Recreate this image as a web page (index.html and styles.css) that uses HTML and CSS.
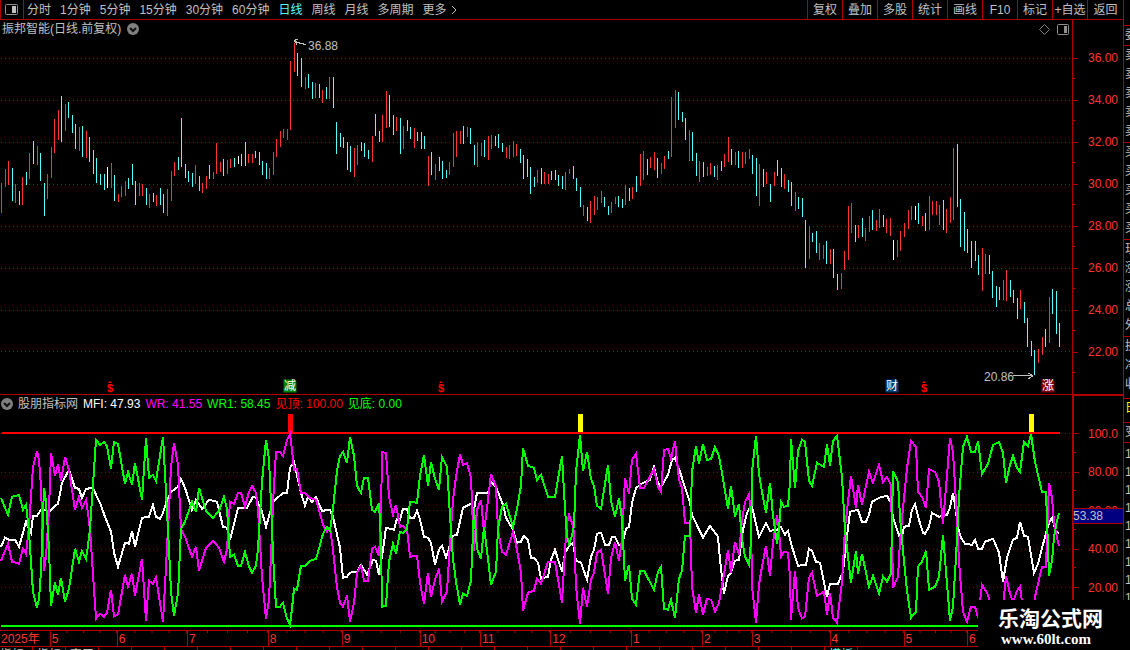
FILE: index.html
```html
<!DOCTYPE html>
<html lang="zh-CN">
<head>
    <meta charset="UTF-8">
    <meta name="viewport" content="width=device-width, initial-scale=1.0">
    <title>振邦智能 日线</title>
    <link rel="stylesheet" href="styles.css">
</head>
<body>
    <div class="terminal">
        <header class="toolbar">
            <button class="layout-btn" aria-label="布局">
                <svg width="13" height="11" viewBox="0 0 13 11"><rect x="0.500" y="0.500" width="12" height="10" rx="1" fill="none" stroke="#909090"/><rect x="7" y="2" width="4" height="7" fill="#c0c0c0"/></svg>
            </button>
            <nav class="periods">
                <button>分时</button>
                <button>1分钟</button>
                <button>5分钟</button>
                <button>15分钟</button>
                <button>30分钟</button>
                <button>60分钟</button>
                <button class="active">日线</button>
                <button>周线</button>
                <button>月线</button>
                <button>多周期</button>
                <button class="more">更多<svg width="6" height="10" viewBox="0 0 6 10"><path d="M1 1l4 4-4 4" fill="none" stroke="#c0c0c0"/></svg></button>
            </nav>
            <div class="tools">
                <button>复权</button>
                <button>叠加</button>
                <button>多股</button>
                <button>统计</button>
                <button>画线</button>
                <button>F10</button>
                <button>标记</button>
                <button>+自选</button>
                <button>返回</button>
            </div>
        </header>

        <section class="price">
            <div class="plot">
                <div class="caption">
                    <span>振邦智能(日线.前复权)</span>
                    <svg class="drop" width="12" height="12" viewBox="0 0 12 12"><circle cx="6" cy="6" r="6" fill="#808080"/><path d="M3 5l3 3 3-3" fill="none" stroke="#101010" stroke-width="2"/></svg>
                    <div class="caption-icons">
                        <svg width="11" height="11" viewBox="0 0 11 11"><path d="M5.500 0.500l5 5-5 5-5-5z" fill="none" stroke="#808080"/></svg>
                        <svg width="12" height="11" viewBox="0 0 12 11"><rect x="0.500" y="0.500" width="11" height="10" rx="1" fill="none" stroke="#909090"/><rect x="7" y="2" width="3" height="7" fill="#909090"/></svg>
                    </div>
                </div>
                <div class="canvas">
                    <svg id="candles" viewBox="0 38 1072 356" preserveAspectRatio="none"></svg>
                    <div id="marks"></div>
                </div>
            </div>
            <ul class="axis">
                <li>36.00</li>
                <li>34.00</li>
                <li>32.00</li>
                <li>30.00</li>
                <li>28.00</li>
                <li>26.00</li>
                <li>24.00</li>
                <li>22.00</li>
            </ul>
        </section>

        <section class="indicator">
            <div class="plot">
                <div class="legend">
                    <svg class="drop" width="12" height="12" viewBox="0 0 12 12"><circle cx="6" cy="6" r="6" fill="#808080"/><path d="M3 5l3 3 3-3" fill="none" stroke="#101010" stroke-width="2"/></svg>
                    <span>股朋指标网</span>
                    <span class="mfi">MFI: 47.93</span>
                    <span class="wr">WR: 41.55</span>
                    <span class="wr1">WR1: 58.45</span>
                    <span class="top">见顶: 100.00</span>
                    <span class="wr1">见底: 0.00</span>
                </div>
                <div class="canvas">
                    <svg id="lines" viewBox="0 412 1072 218" preserveAspectRatio="none"></svg>
                </div>
            </div>
            <ul class="axis">
                <li>100.0</li>
                <li>80.00</li>
                <li>60.00</li>
                <li>40.00</li>
                <li>20.00</li>
            </ul>
            <span class="cursor-value">53.38</span>
        </section>

        <div class="months" id="months"></div>

        <footer class="tabs">
            <button>指标A</button>
            <button>指标</button>
            <button>窗口</button>
            <button>MACD</button>
            <button>DMI</button>
            <button>DMA</button>
            <button>FSL</button>
            <button>TRIX</button>
            <button>BRAR</button>
            <button>CR</button>
            <button>VR</button>
            <button>OBV</button>
            <button>ASI</button>
            <button>EMV</button>
            <button>VOL</button>
            <button>RSI</button>
            <button>WR</button>
            <button>SAR</button>
            <button>KDJ</button>
            <button>CCI</button>
            <button>ROC</button>
            <button>MTM</button>
            <button>BOLL</button>
            <button>PSY</button>
            <button>MCST</button>
            <button class="active">模板</button>
        </footer>
    </div>

    <aside class="quote">
        <div class="group blank"></div>
        <div class="group"><span>委比</span></div>
        <div class="group tall"><span>卖五</span><span>卖四</span><span>卖三</span><span>卖二</span><span>卖一</span></div>
        <div class="group tall"><span>买一</span><span>买二</span><span>买三</span><span>买四</span><span>买五</span></div>
        <div class="group tall"><span>现价</span><span>涨跌</span><span>涨幅</span><span>总量</span><span>外盘</span></div>
        <div class="group three"><span>换手</span><span>净资</span><span>收益</span></div>
        <div class="group date"><span>日期</span></div>
        <div class="group"><span>变动</span></div>
        <div class="group ticks"><span>14</span><span>14</span><span>14</span><span>14</span><span>14</span><span>14</span><span>14</span><span>14</span><span>14</span></div>
    </aside>

    <div class="watermark">
        <strong>乐淘公式网</strong>
        <a href="#">www.60lt.com</a>
    </div>

    <script src="script.js"></script>
</body>
</html>
```
FILE: styles.css
```css
* {
    box-sizing: border-box;
}

body {
    margin: 0;
    height: 100vh;
    min-height: 400px;
    display: flex;
    position: relative;
    overflow: hidden;
    background-color: #000;
    color: #c0c0c0;
    font-family: "Liberation Sans", "Noto Sans CJK SC", sans-serif;
    font-size: 12px;
    line-height: 16px;
}

button {
    background: none;
    border: none;
    padding: 0;
    color: inherit;
    font: inherit;
    white-space: nowrap;
    cursor: pointer;
}

ul {
    list-style: none;
    margin: 0;
    padding: 0;
}

svg {
    display: block;
}

.terminal {
    flex: 1;
    min-width: 0;
    display: flex;
    flex-direction: column;
}

/* top bar */
.toolbar {
    flex: none;
    display: flex;
    height: 20px;
    border-bottom: 1px solid #b00000;
}

.layout-btn {
    width: 24px;
    padding-left: 4px;
    border-left: 1px solid #b00000;
    border-right: 1px solid #b00000;
}

.periods {
    display: flex;
    gap: 9px;
    padding-left: 3px;
}

.periods .active,
.tabs .active {
    color: #54ffff;
}

.more {
    display: flex;
    align-items: center;
    gap: 4px;
}

.tools {
    display: flex;
    margin-left: auto;
}

.tools button {
    width: 35px;
    border-left: 1px solid #b00000;
}

.tools button:last-child {
    width: 36px;
}

/* panels */
.price,
.indicator {
    display: flex;
    min-height: 0;
    position: relative;
}

.price {
    flex: 375;
    border-bottom: 1px solid #b00000;
}

.indicator {
    flex: 235;
}

.plot {
    flex: 1;
    min-width: 0;
    display: flex;
    flex-direction: column;
}

.canvas {
    flex: 1;
    min-height: 0;
    position: relative;
}

.canvas svg {
    width: 100%;
    height: 100%;
    shape-rendering: crispEdges;
}

.caption {
    display: flex;
    align-items: center;
    height: 18px;
    gap: 6px;
    padding-left: 2px;
}

.caption-icons {
    display: flex;
    gap: 7px;
    margin-left: auto;
    padding-right: 3px;
}

.legend {
    display: flex;
    align-items: center;
    height: 17px;
    gap: 5px;
    padding-left: 1px;
    white-space: nowrap;
}

.mfi {
    color: #fff;
}

.wr {
    color: #f0f;
}

.wr1 {
    color: #0f0;
}

.top {
    color: #f00;
}

/* value axis */
.axis {
    width: 51px;
    display: flex;
    flex-direction: column;
    padding: 17px 0 21px;
    border-left: 1px solid #b00000;
    color: #ff3232;
}

.indicator .axis {
    padding: 18px 0 23px;
    border-left-width: 2px;
    border-top: 1px solid #b00000;
}

.axis li {
    flex: 1;
    display: flex;
    align-items: center;
    justify-content: flex-end;
    padding-right: 5px;
    background: linear-gradient(#b00000, #b00000) 0 50% / 5px 1px no-repeat,
        linear-gradient(#b00000, #b00000) 0 100% / 2px 1px no-repeat;
}

.cursor-value {
    position: absolute;
    right: 0;
    top: 48%;
    width: 50px;
    border: solid #b00000;
    border-width: 1px 0;
    background-color: #000080;
    line-height: 14px;
}

/* time axis */
.months {
    flex: none;
    display: flex;
    height: 17px;
    padding-right: 51px;
    border-top: 1px solid #b00000;
    border-bottom: 1px solid #b00000;
    color: #ff3232;
}

.months span {
    padding-left: 1px;
    min-width: 0;
    border-left: 1px solid #b00000;
    background: linear-gradient(to left, #b00000 1px, transparent 1px) 0 0 / 25% 2px repeat-x;
    white-space: nowrap;
}

.months span:first-child {
    border-left: none;
    background: none;
}

.tabs {
    flex: none;
    display: flex;
    height: 3px;
    overflow: hidden;
}

.tabs button {
    width: 33px;
    height: 16px;
    overflow: hidden;
    border-right: 1px solid #b00000;
}

/* labels over the candles */
.mark {
    position: absolute;
    transform: translate(-50%, -50%);
}

.badge {
    width: 13px;
    height: 13px;
    border-radius: 0 3px 0 0;
    color: #fff;
    line-height: 13px;
    text-align: center;
}

.sell {
    background-color: #008000;
}

.report {
    background-color: #003870;
}

.rise {
    background-color: #800000;
}

.dividend {
    color: #f00;
    font-size: 11px;
    font-weight: bold;
    line-height: 12px;
}

.dividend::before {
    content: "";
    position: absolute;
    left: 1px;
    top: -1px;
    border: solid transparent;
    border-width: 0 2px 2px;
    border-bottom-color: #f00;
}

/* clipped quote column */
.quote {
    flex: none;
    width: 7px;
    overflow: hidden;
    border-left: 1px solid #b00000;
}

.group {
    display: flex;
    flex-direction: column;
    border-bottom: 1px solid #b00000;
    white-space: nowrap;
}

.group span {
    height: 19px;
    padding-left: 1px;
    line-height: 19px;
}

.blank {
    height: 26px;
}

.tall {
    height: 97px;
}

.three {
    height: 62px;
}

.date {
    height: 24px;
    color: #ff0;
}

.ticks {
    padding-top: 2px;
    border-bottom: none;
}

.ticks span {
    height: 18px;
}

/* site mark in the corner */
.watermark {
    position: absolute;
    right: 0;
    bottom: 0;
    width: 152px;
    height: 50px;
    padding: 7px 0 0 20px;
    background-color: #000;
    color: #fff;
    white-space: nowrap;
}

.watermark strong {
    display: block;
    font-size: 21px;
    line-height: 24px;
}

.watermark a {
    display: block;
    padding-left: 3px;
    color: inherit;
    font: bold 15px/16px "Liberation Serif", serif;
    text-decoration: none;
}
```
FILE: script.js
```js
// one bar per day: colour (r up, c down, w flat), high, low
const bars = (
    "r183-213 r169-187 r161-185 c168-201 r184-203 c191-205 r177-205 c172-185 r153-179 c141-164 " +
    "r146-165 c153-181 c183-216 r174-199 r147-178 r119-153 r110-140 c96-142 r104-131 c102-118 " +
    "c115-133 c124-149 r127-151 c126-157 r131-158 c137-162 c150-174 c158-183 c174-185 c174-190 " +
    "w167-188 r163-188 c175-201 r194-202 r186-197 r181-196 c178-189 c164-185 c181-205 r183-196 " +
    "r184-196 c188-205 r194-208 c193-202 r195-206 c188-205 c194-213 r189-216 r171-201 r162-176 " +
    "c157-170 c118-167 c164-178 c171-182 c173-187 r165-184 c176-191 r183-193 r176-189 c165-179 " +
    "r172-179 r143-174 r162-172 c159-176 r160-174 r159-168 c158-167 w156-164 c154-166 c142-166 " +
    "r154-163 r154-163 c151-158 c152-165 c161-175 c163-179 r168-179 r152-175 r139-157 r131-147 " +
    "r129-138 r129-140 r61-130 r43-72 c53-76 c58-87 r77-89 c74-88 c82-99 r83-98 " +
    "c84-98 r90-103 c87-99 r77-99 c77-108 c122-154 c133-147 c137-148 c142-170 c146-172 " +
    "r148-177 r145-165 c142-151 c143-157 c150-159 r136-162 c114-136 c131-142 r115-142 r91-128 " +
    "c95-127 c115-135 r117-131 c118-154 r126-149 c120-131 c127-139 r128-148 c132-141 c132-149 " +
    "c136-149 r156-186 c152-175 r164-180 c157-171 c161-179 c170-178 r162-175 r133-167 r131-157 " +
    "r131-144 c126-144 r127-137 c128-144 c145-165 r142-167 r143-156 c140-157 r136-160 r135-149 " +
    "c136-146 c134-148 c143-152 r147-158 r145-159 r141-157 r144-156 c149-163 c155-179 c159-177 " +
    "c167-194 c177-187 r170-183 c168-184 r172-184 r174-184 c171-180 c170-180 c175-186 c176-189 " +
    "r172-190 r169-174 c166-179 c178-191 c187-207 r205-216 c207-221 r201-223 r196-215 r197-210 " +
    "r191-203 c197-207 c206-215 r202-213 r197-204 c196-207 c199-208 r185-205 c188-201 r187-199 " +
    "c176-192 r154-186 r151-180 c159-175 r157-168 r152-170 c158-178 r163-174 r156-169 c151-159 " +
    "r97-157 r90-128 c92-120 c112-122 c118-140 r130-161 c132-161 c153-176 r161-182 c162-177 " +
    "r167-176 r163-175 c166-177 r165-180 c161-171 r154-167 r137-162 c149-165 r152-165 c151-168 " +
    "r152-168 r152-164 r149-159 c155-174 c158-196 r164-206 c169-187 r172-184 c184-202 r172-186 " +
    "c160-176 c168-187 r174-189 c180-192 c182-206 r192-211 c197-209 c198-217 c220-268 r226-259 " +
    "c233-242 c231-253 r243-260 r245-259 c241-264 r249-264 c249-278 c274-290 r273-289 r251-270 " +
    "r206-260 r203-233 c225-242 r225-238 c218-237 r228-241 r216-232 c210-230 r220-231 r209-228 " +
    "c215-227 r219-233 r218-236 w240-260 r240-257 r231-251 r223-237 r210-229 r206-220 w206-220 " +
    "c203-224 r216-226 c213-231 r196-230 r201-215 r201-215 r205-225 c200-230 r209-233 r197-223 " +
    "r148-220 c144-207 c199-247 c212-251 c229-253 c241-268 c241-261 c255-275 r248-291 r254-274 " +
    "c255-274 c271-298 c286-307 c287-300 r280-300 r270-301 c280-297 c290-303 c298-319 r290-309 " +
    "c302-323 c318-347 c341-356 c350-375 r349-363 r337-355 c329-347 r297-343 c289-314 c291-334 c323-347"
).split(" ");

const wr =
    "1,561 8,544 12,562 19,564 23,549 26,554 29,527 33,467 37,451 39,460 41,487 44,571 46,557 49,510 51,453 55,476 58,464 61,481 65,457 69,470 75,510 79,497 82,508 86,500 88,513 90,530 96,619 100,614 104,617 107,613 111,590 114,617 118,615 125,575 128,587 132,574 135,596 142,559 146,621 149,581 153,584 156,578 163,622 166,567 169,510 171,467 174,443 178,465 181,530 185,537 192,557 196,547 199,571 206,548 213,541 219,548 224,562 227,550 230,502 234,504 238,493 241,493 245,507 249,492 252,486 256,493 258,510 262,577 266,619 269,600 272,533 273,503 276,452 " +
    "280,452 283,456 287,440 290,434 292,450 294,470 297,469 301,493 305,493 310,498 316,500 319,510 323,525 327,532 330,528 333,550 337,588 340,603 343,607 347,596 350,622 354,603 357,573 361,566 364,581 368,581 372,549 375,547 379,556 381,517 382,452 386,453 389,497 393,515 396,505 400,527 403,526 407,530 410,557 417,556 420,583 424,604 428,573 431,597 435,580 439,569 442,602 447,592 450,543 453,500 456,477 460,454 463,465 467,463 471,478 474,551 477,510 481,500 484,532 488,500 491,474 496,487 498,530 502,552 506,555 513,532 517,550 521,573 523,611 528,593 534,591 537,579 541,584 548,562 " +
    "555,562 562,603 565,550 567,523 569,515 572,523 574,533 576,587 580,624 583,588 587,607 591,580 594,573 597,553 601,550 608,594 611,558 615,542 619,561 622,540 625,478 629,494 632,460 636,454 640,488 644,488 654,469 658,487 661,492 664,450 668,449 671,459 675,441 679,480 682,488 685,523 690,523 692,587 696,613 699,595 703,615 707,599 711,600 715,612 719,603 723,580 728,550 731,573 735,542 739,555 742,520 745,502 749,494 751,517 752,587 756,623 759,585 762,567 766,546 770,576 773,543 777,515 779,530 781,557 784,552 788,553 790,577 791,620 795,571 798,608 " +
    "802,619 805,617 809,578 812,573 817,596 824,592 827,615 830,593 833,618 837,623 842,582 845,528 848,502 851,476 856,508 858,485 862,505 869,472 873,483 879,465 883,482 887,477 891,485 893,588 898,577 900,542 903,508 907,468 911,441 916,447 918,492 922,497 926,508 929,469 935,472 939,482 943,524 947,475 950,438 953,452 956,502 959,562 963,612 967,622 971,607 975,607 978,618 982,585 988,595 993,614 999,617 1003,606 1006,576 1010,594 1013,603 1017,591 1020,587 1024,617 1028,613 1031,625 1035,597 1042,567 1046,567 1049,483 1052,498 1054,522 1057,538 1059,546";

const mfi =
    "1,547 5,538 9,540 15,540 19,547 23,533 26,522 28,527 31,533 33,516 37,516 41,510 50,511 54,507 58,504 62,483 69,470 75,488 79,489 82,498 86,489 93,488 97,497 100,503 105,517 111,532 114,553 118,567 125,543 129,544 132,531 135,547 142,518 149,517 153,505 156,517 160,519 163,513 167,500 171,492 178,487 181,479 185,488 192,510 196,500 202,509 209,500 217,502 223,527 227,528 230,540 238,508 247,508 253,497 256,498 262,512 266,527 273,502 " +
    "283,493 287,493 290,468 294,462 301,493 305,506 308,497 312,502 316,497 322,511 330,510 333,517 340,548 343,578 347,577 350,573 357,572 361,565 367,575 373,560 376,561 379,575 383,550 386,528 394,530 397,519 400,520 403,509 407,509 410,518 414,518 417,511 420,520 424,537 428,538 431,543 435,565 439,550 442,546 446,558 451,542 453,536 457,535 463,508 471,504 474,510 477,493 488,493 491,482 496,487 503,505 506,518 513,530 517,543 521,542 524,536 528,540 531,558 534,558 538,563 541,579 548,577 " +
    "551,560 555,550 562,572 565,553 570,545 573,543 576,561 581,563 587,580 591,557 594,550 597,534 601,533 605,545 609,545 612,537 615,537 619,545 622,545 626,529 629,527 632,503 636,488 643,483 650,480 654,467 658,483 661,487 668,475 672,460 675,458 680,472 690,503 692,515 703,538 710,526 718,537 720,560 724,594 728,576 731,573 735,561 739,560 743,530 747,513 750,507 752,507 759,537 766,523 770,531 777,530 781,527 785,535 788,531 792,547 798,566 " +
    "806,565 809,549 812,551 816,562 820,563 824,583 827,597 830,584 838,584 843,572 846,545 850,512 858,510 862,522 866,522 869,515 872,502 879,498 887,496 891,503 893,518 901,541 904,527 909,526 912,510 915,504 919,520 923,533 925,534 929,527 932,513 939,517 947,515 950,508 953,493 955,505 958,528 961,538 965,544 972,545 975,540 978,549 982,549 985,542 993,539 999,553 1003,582 1007,558 1013,540 1017,538 1020,522 1024,536 1028,537 1034,573 1038,564 1045,537 1049,523 1052,518 1056,532 1059,533";

// WR1 = 100 - WR
const wr1 = wr.split(" ").map(p => {
    const [x, y] = p.split(",").map(Number);
    return x + "," + (1059 - y);
}).join(" ");

const colors = { r: "#ff3232", c: "#54ffff", w: "#ffffff" };

function rect(x, y, w, h, fill) {
    return `<rect x="${x}" y="${y}" width="${w}" height="${h}" fill="${fill}"/>`;
}

function grid(levels) {
    return levels.map(y => `<path d="M1 ${y + 0.5}H1072" stroke="#a00000" stroke-dasharray="1 3"/>`).join("");
}

function drawCandles() {
    let out = grid([58, 100, 142, 184, 226, 268, 310, 351]);
    bars.forEach((bar, i) => {
        const [high, low] = bar.slice(1).split("-").map(Number);
        out += rect(Math.floor(1.75 + i * 67 / 19), high, 1, low - high, colors[bar[0]]);
    });
    // arrows to the highest and lowest price
    out += '<path d="M306 44.500L301 43.500L295 41.500M298 39.500H295.500L294.500 41.500L297 44.500" fill="none" stroke="#c0c0c0"/>';
    out += '<path d="M1013 375.500H1033M1028 372.500L1033 375.500L1028 378.500" fill="none" stroke="#c0c0c0"/>';
    document.getElementById("candles").innerHTML = out;
}

function drawLines() {
    let out = grid([433, 472, 510, 549, 587]);
    out += rect(2, 432, 1058, 2, "#f00") + rect(1, 625, 1059, 2, "#0f0");
    out += rect(288, 414, 5, 18, "#f00") + rect(578, 414, 5, 18, "#ff0") + rect(1029, 414, 5, 18, "#ff0");
    [[mfi, "#fff"], [wr, "#f0f"], [wr1, "#0f0"]].forEach(([points, color]) => {
        out += `<polyline points="${points}" fill="none" stroke="${color}" stroke-width="2"/>`;
    });
    document.getElementById("lines").innerHTML = out;
}

function drawMarks() {
    const marks = [
        [110, 388, "dividend", "$"],
        [290, 386, "badge sell", "减"],
        [441, 388, "dividend", "$"],
        [892, 386, "badge report", "财"],
        [924, 388, "dividend", "$"],
        [1048, 386, "badge rise", "涨"],
        [323, 46, "", "36.88"],
        [999, 377, "", "20.86"]
    ];
    document.getElementById("marks").innerHTML = marks.map(([x, y, cls, text]) =>
        `<span class="mark ${cls}" style="left:${x / 10.72}%;top:${(y - 38) / 3.56}%">${text}</span>`
    ).join("");
}

function drawMonths() {
    const starts = [0, 50, 117, 187, 268, 342, 420, 480, 550, 631, 702, 751, 829, 903, 966, 1072];
    const names = ["2025年", 5, 6, 7, 8, 9, 10, 11, 12, 1, 2, 3, 4, 5, 6];
    document.getElementById("months").innerHTML = names.map((name, i) =>
        `<span style="flex:${starts[i + 1] - starts[i]} 0 0">${name}</span>`
    ).join("");
}

drawCandles();
drawLines();
drawMarks();
drawMonths();
```
